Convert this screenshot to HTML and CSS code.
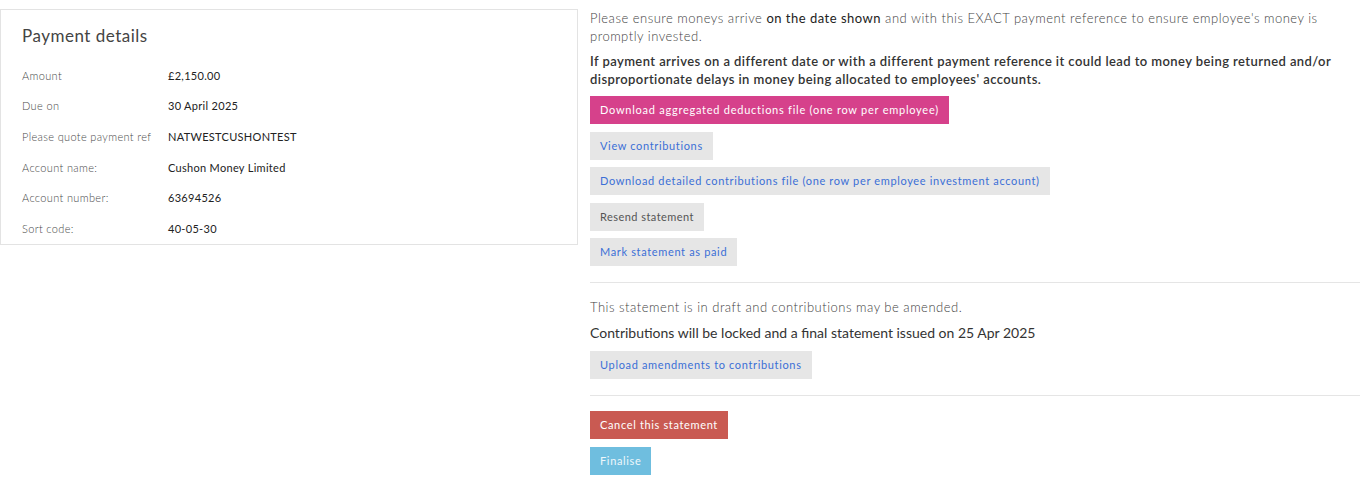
FILE: index.html
```html
<!DOCTYPE html>
<html>
<head>
    <title>Statement</title>
    <link rel="stylesheet" href="styles.css">
</head>
<body>
    <div class="page">
        <div class="card">
            <h2>Payment details</h2>
            <div class="details">
                <div class="label">Amount</div>
                <div class="value">£2,150.00</div>
                <div class="label">Due on</div>
                <div class="value">30 April 2025</div>
                <div class="label">Please quote payment ref</div>
                <div class="value">NATWESTCUSHONTEST</div>
                <div class="label">Account name:</div>
                <div class="value">Cushon Money Limited</div>
                <div class="label">Account number:</div>
                <div class="value">63694526</div>
                <div class="label">Sort code:</div>
                <div class="value">40-05-30</div>
            </div>
        </div>

        <div class="actions">
            <p class="note">Please ensure moneys arrive <b>on the date shown</b> and with this EXACT payment reference to ensure employee's money is promptly invested.</p>
            <p class="warning">If payment arrives on a different date or with a different payment reference it could lead to money being returned and/or disproportionate delays in money being allocated to employees' accounts.</p>
            <div class="buttons">
                <a href="#" class="btn btn-pink">Download aggregated deductions file (one row per employee)</a>
                <a href="#" class="btn btn-link">View contributions</a>
                <a href="#" class="btn btn-link">Download detailed contributions file (one row per employee investment account)</a>
                <a href="#" class="btn btn-plain">Resend statement</a>
                <a href="#" class="btn btn-link">Mark statement as paid</a>
            </div>
            <hr>
            <p class="note">This statement is in draft and contributions may be amended.</p>
            <p class="lock">Contributions will be locked and a final statement issued on 25 Apr 2025</p>
            <div class="buttons">
                <a href="#" class="btn btn-link">Upload amendments to contributions</a>
            </div>
            <hr>
            <div class="buttons">
                <a href="#" class="btn btn-red">Cancel this statement</a>
                <a href="#" class="btn btn-blue">Finalise</a>
            </div>
        </div>
    </div>
</body>
</html>
```

FILE: styles.css
```css
body {
    margin: 0;
    padding: 0;
    font-family: Lato, "Open Sans", sans-serif;
    background-color: #fff;
    color: #555;
}
.page {
    display: grid;
    grid-template-columns: 578px 1fr;
    column-gap: 12px;
    align-items: start;
}
.card {
    margin-top: 9px;
    border: 1px solid #e3e3e3;
    padding: 15px 20px 0 21px;
}
.card h2 {
    margin: 0 0 14px;
    font-size: 17px;
    font-weight: 400;
    letter-spacing: 0.5px;
    color: #444;
}
.details {
    display: grid;
    grid-template-columns: 146px 1fr;
    grid-auto-rows: 30.6px;
    font-size: 11px;
    align-items: center;
}
.label {
    color: #4a4a4a;
    font-weight: 300;
    letter-spacing: 0.35px;
}
.value {
    color: #222;
    letter-spacing: 0.3px;
}
.actions {
    padding-top: 9px;
}
.actions p {
    margin: 0 0 7px;
    font-size: 13px;
    line-height: 18px;
}
.note {
    color: #444;
    font-weight: 300;
    letter-spacing: 0.5px;
}
.note b {
    font-weight: 400;
    color: #222;
}
.actions .warning {
    color: #333;
    font-weight: 600;
    letter-spacing: 0.42px;
    margin-bottom: 8px;
}
.actions .lock {
    color: #333;
    font-size: 14px;
    margin-top: 8px;
    margin-bottom: 9px;
}
.buttons {
    display: flex;
    flex-direction: column;
    align-items: flex-start;
    gap: 7.5px;
}
.btn {
    display: inline-block;
    padding: 0 10px;
    height: 28px;
    line-height: 28px;
    font-size: 11px;
    letter-spacing: 0.65px;
    text-decoration: none;
    border: none;
}
.btn-pink {
    background-color: #d6418b;
    color: #fff;
    letter-spacing: 0.75px;
}
.btn-link {
    background-color: #e6e6e6;
    color: #3b6fd6;
}
.btn-plain {
    background-color: #e6e6e6;
    color: #555;
    letter-spacing: 0.45px;
}
.btn-red {
    background-color: #c95a52;
    color: #fff;
}
.btn-blue {
    background-color: #6fbedf;
    color: #eef7fb;
}
hr {
    border: none;
    border-top: 1px solid #e5e5e5;
    margin: 16px 0 15px;
}
```
